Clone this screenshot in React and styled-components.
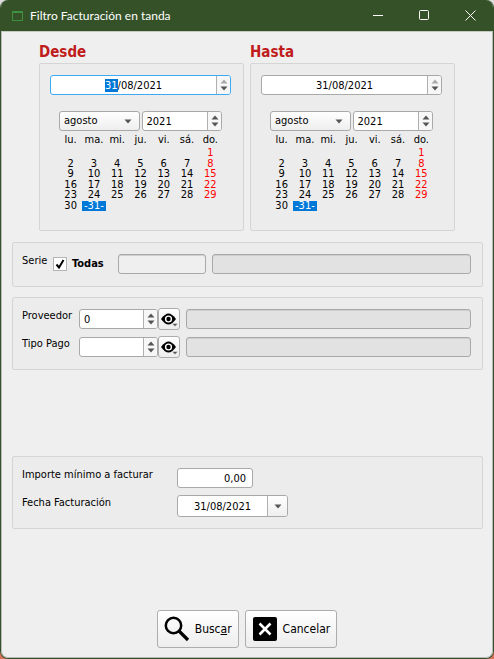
import React, { useEffect, useRef, useState } from "react";
import styled, { createGlobalStyle, css } from "styled-components";

const GlobalStyle = createGlobalStyle`
  * { box-sizing: border-box; }
  body { margin: 0; background: linear-gradient(#dcdcdc 50%, #d9705a 50%); }
  body, button, input, select {
    font-family: "DejaVu Sans Condensed", "DejaVu Sans", sans-serif;
    font-size: 11px;
    line-height: 14px;
    color: #000;
  }
`;

const Window = styled.div`
  display: flex;
  flex-direction: column;
  min-height: 100vh;
  overflow: hidden;
  border: 1px solid #345127;
  border-top: 0;
  border-radius: 8px;
  background: #efefef;
`;

const TitleBar = styled.header`
  display: flex;
  align-items: center;
  height: 31px;
  padding-left: 10px;
  background: #345127;
  color: #fff;
`;

const TitleText = styled.h1`
  flex: 1;
  margin: 0 0 0 6px;
  font: 400 12px/16px Lato, "Open Sans", sans-serif;
`;

const CaptionButton = styled.button`
  display: grid;
  place-items: center;
  width: 46px;
  height: 31px;
  padding: 0;
  border: 0;
  background: none;
  color: #fff;
`;

const Form = styled.form`
  display: flex;
  flex: 1;
  flex-direction: column;
  padding-bottom: 9px;
  border: 1px solid #b9b9b9;
  border-top-color: #c3cabf;
  border-radius: 0 0 7px 7px;
`;

const Periods = styled.div`
  display: grid;
  grid-template-columns: 1fr 1fr;
  gap: 6px;
  padding: 9px 37px 0;
`;

const PeriodTitle = styled.h2`
  margin: 0;
  font-size: 15px;
  line-height: 22px;
  font-weight: 700;
  color: #c01c1c;
`;

const panel = css`
  border: 1px solid #d5d5d5;
  border-radius: 2px;
  background: #ececec;
`;

const PeriodPanel = styled.section`
  ${panel}
  padding: 11px 12px 19px 10px;
`;

const CalendarArea = styled.div`
  margin: 16px 9px 0;
`;

const CalendarNav = styled.div`
  display: grid;
  grid-template-columns: 1fr 1fr;
  gap: 2px;
`;

const fieldFrame = css`
  border: 1px solid #a9a9a9;
  border-radius: 3px;
  background: #fff;
`;

const SpinFrame = styled.div`
  ${fieldFrame}
  display: flex;
  width: ${(p) => p.$width || "auto"};
  height: 20px;
  overflow: hidden;
  border-color: ${(p) => (p.$active ? "#3fa9f5" : "#a9a9a9")};
`;

const BareInput = styled.input`
  flex: 1;
  width: 0;
  min-width: 0;
  height: 100%;
  padding: 0 4px;
  border: 0;
  outline: 0;
  background: transparent;
  text-align: ${(p) => p.$align || "left"};
  &::selection { background: #0078d7; color: #fff; }
`;

const Steps = styled.div`
  display: flex;
  flex-direction: column;
  width: 14px;
  border-left: 1px solid #b0b0b0;
  background: #f7f7f7;
`;

const StepButton = styled.button`
  display: flex;
  flex: 1;
  align-items: ${(p) => (p.$up ? "flex-end" : "flex-start")};
  justify-content: center;
  min-height: 0;
  padding: 1px 0;
  border: 0;
  background: none;
  color: #555;
  &:disabled { color: #aaa; }
`;

const SelectFrame = styled.div`
  ${fieldFrame}
  position: relative;
  height: 20px;
  background: linear-gradient(#fff, #eee);
  svg {
    position: absolute;
    top: 7px;
    right: 7px;
    pointer-events: none;
    color: #555;
  }
`;

const Select = styled.select`
  width: 100%;
  height: 100%;
  padding: 0 4px;
  border: 0;
  outline: 0;
  appearance: none;
  background: transparent;
`;

const Calendar = styled.table`
  width: 100%;
  height: 80px;
  table-layout: fixed;
  border-collapse: collapse;
  text-align: center;
  line-height: 10px;
`;

const Weekday = styled.th`
  height: 17px;
  padding: 0;
  font-weight: 400;
  vertical-align: middle;
`;

const Day = styled.td`
  padding: 0;
  color: ${(p) => (p.$selected ? "#fff" : p.$sunday ? "#f00" : "#000")};
  background: ${(p) => (p.$selected ? "#0078d7" : "none")};
`;

const Group = styled.section`
  ${panel}
  display: grid;
  gap: 8px;
  margin: ${(p) => p.$top || "0"} 9px 0 10px;
  padding: 11px 11px 12px 9px;
`;

const Row = styled.div`
  display: flex;
  align-items: center;
  height: 20px;
`;

const RowLabel = styled.label`
  align-self: flex-start;
  flex: none;
  width: ${(p) => p.$width};
`;

const CheckLabel = styled.label`
  display: flex;
  align-items: center;
  gap: 5px;
  width: 65px;
  font-weight: 700;
`;

const CheckHolder = styled.span`
  display: grid;
  flex: none;
  width: 14px;
  height: 14px;
  > * { grid-area: 1 / 1; }
  svg { pointer-events: none; visibility: hidden; }
  input:checked + svg { visibility: visible; }
`;

const CheckBox = styled.input`
  width: 14px;
  height: 14px;
  margin: 0;
  appearance: none;
  border: 1px solid #b4b4b4;
  background: #fff;
`;

const TextBox = styled.input`
  ${fieldFrame}
  flex: ${(p) => (p.$width ? "none" : 1)};
  width: ${(p) => p.$width || "auto"};
  min-width: 0;
  height: 20px;
  margin-left: ${(p) => p.$gap || "0"};
  padding: 0 6px;
  outline: 0;
  text-align: ${(p) => p.$align || "left"};
  background: ${(p) => p.$fill || "#fff"};
  ${(p) => p.$fill && "box-shadow: inset 0 1px #cfcfcf;"}
`;

const raised = css`
  border: 1px solid #adadad;
  border-radius: 3px;
  background: linear-gradient(#fff, #ededed);
`;

const EyeButton = styled.button`
  ${raised}
  display: grid;
  flex: none;
  place-items: center;
  width: 22px;
  height: 22px;
  padding: 0;
`;

const DateFrame = styled.div`
  ${fieldFrame}
  display: flex;
  width: 111px;
  height: 22px;
  overflow: hidden;
`;

const DropButton = styled.button`
  display: grid;
  place-items: center;
  width: 20px;
  padding: 0;
  border: 0;
  border-left: 1px solid #b0b0b0;
  background: linear-gradient(#fff, #eee);
  color: #555;
`;

const Spacer = styled.div`
  flex: ${(p) => p.$grow || 1};
  min-height: 16px;
`;

const Actions = styled.footer`
  display: flex;
  justify-content: center;
  gap: 6px;
`;

const ActionButton = styled.button`
  ${raised}
  display: flex;
  align-items: center;
  gap: 4px;
  height: 38px;
  padding: 0 6px 0 5px;
  font-size: 12px;
`;

const Arrow = ({ up }) => (
  <svg width="8" height="5" viewBox="0 0 8 5" aria-hidden="true">
    <path d={up ? "M.5 4.5h7L4 .5z" : "M.5.5h7L4 4.5z"} fill="currentColor" />
  </svg>
);

const WindowIcon = () => (
  <svg width="13" height="12" viewBox="0 0 13 12" aria-hidden="true">
    <path d="M1.5 1.5h10v9h-10z" fill="none" stroke="#3f9142" />
    <path d="M1 1h11v2H1z" fill="#3f9142" />
  </svg>
);

const EyeIcon = () => (
  <svg width="18" height="18" viewBox="0 0 18 18" aria-hidden="true">
    <path d="M1 9Q5 3.5 8.5 3.5T16 9Q12 14.5 8.5 14.5T1 9z" fill="#000" />
    <circle cx="8.5" cy="9" r="3.6" fill="#fff" />
    <circle cx="8.5" cy="9" r="2.2" fill="#000" />
    <path d="M12 13.5h6l-3 3z" fill="#555" stroke="#f3f3f3" strokeWidth=".5" />
  </svg>
);

const SearchIcon = () => (
  <svg width="28" height="28" viewBox="0 0 28 28" fill="none" stroke="#000" aria-hidden="true">
    <circle cx="10.5" cy="10.5" r="7.7" strokeWidth="2.5" />
    <path d="M16 16l9 9" strokeWidth="3.2" />
  </svg>
);

const CancelIcon = () => (
  <svg width="28" height="28" viewBox="0 0 28 28" aria-hidden="true">
    <rect x="2" y="2" width="24" height="24" rx="2" fill="#000" />
    <path d="M8.5 8.5l11 11M19.5 8.5l-11 11" stroke="#fff" strokeWidth="2.6" />
  </svg>
);

const Spinner = ({ children, width, active, atMax, name }) => (
  <SpinFrame $width={width} $active={active}>
    {children}
    <Steps>
      <StepButton type="button" $up disabled={atMax} aria-label={`Aumentar ${name}`}>
        <Arrow up />
      </StepButton>
      <StepButton type="button" aria-label={`Disminuir ${name}`}>
        <Arrow />
      </StepButton>
    </Steps>
  </SpinFrame>
);

const WEEKDAYS = ["lu.", "ma.", "mi.", "ju.", "vi.", "sá.", "do."];
const WEEKS = Array.from({ length: 6 }, (_, w) =>
  Array.from({ length: 7 }, (_, d) => w * 7 + d - 5)
);

function Period({ title, active }) {
  const dateRef = useRef(null);
  useEffect(() => {
    if (active) {
      dateRef.current.focus();
      dateRef.current.setSelectionRange(0, 2);
    }
  }, [active]);

  return (
    <div>
      <PeriodTitle>{title}</PeriodTitle>
      <PeriodPanel>
        <Spinner active={active} atMax name={`fecha ${title}`}>
          <BareInput ref={dateRef} $align="center" defaultValue="31/08/2021" aria-label={title} />
        </Spinner>
        <CalendarArea>
          <CalendarNav>
            <SelectFrame>
              <Select aria-label={`Mes ${title}`}>
                <option>agosto</option>
              </Select>
              <Arrow />
            </SelectFrame>
            <Spinner name={`año ${title}`}>
              <BareInput defaultValue="2021" aria-label={`Año ${title}`} />
            </Spinner>
          </CalendarNav>
          <Calendar>
            <thead>
              <tr>
                {WEEKDAYS.map((d) => (
                  <Weekday key={d}>{d}</Weekday>
                ))}
              </tr>
            </thead>
            <tbody>
              {WEEKS.map((week, i) => (
                <tr key={i}>
                  {week.map((day, col) => (
                    <Day key={day} $sunday={col === 6} $selected={day === 31}>
                      {day === 31 ? "-31-" : day > 0 && day < 31 ? day : ""}
                    </Day>
                  ))}
                </tr>
              ))}
            </tbody>
          </Calendar>
        </CalendarArea>
      </PeriodPanel>
    </div>
  );
}

const LookupRow = ({ id, label, value }) => (
  <Row>
    <RowLabel htmlFor={id} $width="57px">{label}</RowLabel>
    <Spinner width="79px" name={label}>
      <BareInput id={id} defaultValue={value} />
    </Spinner>
    <EyeButton type="button" aria-label={`Ver ${label}`}>
      <EyeIcon />
    </EyeButton>
    <TextBox $gap="6px" $fill="#e2e2e2" disabled aria-label={`Nombre ${label}`} />
  </Row>
);

export default function App() {
  const [all, setAll] = useState(true);
  return (
    <>
      <GlobalStyle />
      <Window>
        <TitleBar>
          <WindowIcon />
          <TitleText>Filtro Facturación en tanda</TitleText>
          <CaptionButton aria-label="Minimizar">
            <svg width="11" height="11" stroke="currentColor"><path d="M0 5.5h10" /></svg>
          </CaptionButton>
          <CaptionButton aria-label="Maximizar">
            <svg width="11" height="11" fill="none" stroke="currentColor">
              <rect x=".5" y=".5" width="9" height="9" rx="1" />
            </svg>
          </CaptionButton>
          <CaptionButton aria-label="Cerrar">
            <svg width="11" height="11" stroke="currentColor"><path d="M.5.5l10 10M10.5.5l-10 10" /></svg>
          </CaptionButton>
        </TitleBar>
        <Form onSubmit={(e) => e.preventDefault()}>
          <Periods>
            <Period title="Desde" active />
            <Period title="Hasta" />
          </Periods>

          <Group $top="11px">
            <Row>
              <RowLabel as="span" $width="31px">Serie</RowLabel>
              <CheckLabel>
                <CheckHolder>
                  <CheckBox type="checkbox" checked={all} onChange={(e) => setAll(e.target.checked)} />
                  <svg width="14" height="14" viewBox="0 0 14 14" aria-hidden="true">
                    <path d="M3.5 7.5L6 10.5l4.5-7.5" fill="none" stroke="#000" strokeWidth="2" />
                  </svg>
                </CheckHolder>
                Todas
              </CheckLabel>
              <TextBox $width="88px" $fill="#efefef" disabled aria-label="Serie" />
              <TextBox $gap="6px" $fill="#e2e2e2" disabled aria-label="Nombre Serie" />
            </Row>
          </Group>

          <Group $top="10px">
            <LookupRow id="proveedor" label="Proveedor" value="0" />
            <LookupRow id="tipo-pago" label="Tipo Pago" value="" />
          </Group>

          <Spacer $grow={17} />

          <Group>
            <Row>
              <RowLabel htmlFor="importe" $width="155px">Importe mínimo a facturar</RowLabel>
              <TextBox id="importe" $width="76px" $align="right" defaultValue="0,00" />
            </Row>
            <Row>
              <RowLabel htmlFor="fecha" $width="155px">Fecha Facturación</RowLabel>
              <DateFrame>
                <BareInput id="fecha" $align="center" defaultValue="31/08/2021" />
                <DropButton type="button" aria-label="Abrir calendario">
                  <Arrow />
                </DropButton>
              </DateFrame>
            </Row>
          </Group>

          <Spacer $grow={16} />

          <Actions>
            <ActionButton type="submit">
              <SearchIcon />
              <span>Busc<u>a</u>r</span>
            </ActionButton>
            <ActionButton type="button">
              <CancelIcon />
              Cancelar
            </ActionButton>
          </Actions>
        </Form>
      </Window>
    </>
  );
}
